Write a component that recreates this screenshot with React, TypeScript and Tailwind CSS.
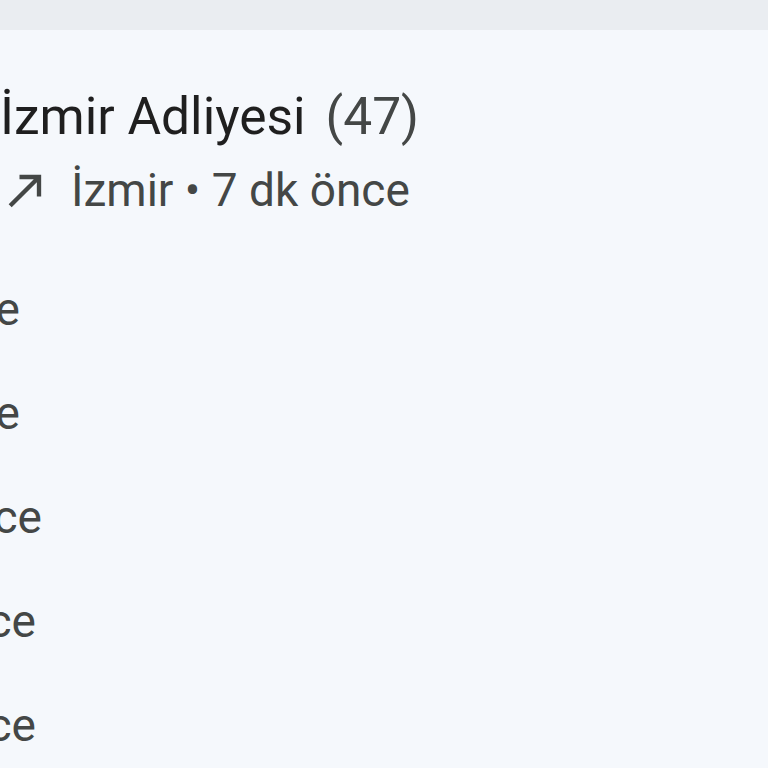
import React from "react";

const rows = [
  { text: "Ankara • 3 dk önce", w: "w-[420px]" },
  { text: "İstanbul • 5 dk önce", w: "w-[420px]" },
  { text: "Bursa • 12 dk önce", w: "w-[442px]" },
  { text: "Antalya • 18 dk önce", w: "w-[436px]" },
  { text: "Konya • 25 dk önce", w: "w-[436px]" },
];

export default function App() {
  return (
    <div
      className="w-[768px] h-[768px] overflow-hidden bg-[#f5f8fc] flex flex-col"
      style={{ fontFamily: "Roboto, 'Noto Sans', sans-serif" }}
    >
      <div className="h-[30px] shrink-0 bg-[#eaedf1]" />
      <div className="flex flex-col pt-[57px]">
        <div className="flex items-baseline text-[51.5px] leading-[60px] whitespace-nowrap">
          <span className="text-[#1f1f1f]">İzmir Adliyesi</span>
          <span className="ml-[20px] text-[#444746]">(47)</span>
        </div>
        <div className="mt-[15px] flex items-center h-[56px] text-[46px] leading-[56px] text-[#444746] whitespace-nowrap">
          <svg width="52" height="52" viewBox="0 0 24 24" className="shrink-0" fill="#444746">
            <path d="M9 5v2h6.59L4 18.59 5.41 20 17 8.41V15h2V5H9z" />
          </svg>
          <span className="ml-[19px]">İzmir • 7 dk önce</span>
        </div>
        <div className="mt-[39px] -ml-[400px] flex flex-col">
          {rows.map((r, i) => (
            <div
              key={i}
              className={`${r.w} h-[104px] text-right text-[46px] leading-[104px] text-[#444746] whitespace-nowrap`}
            >
              {r.text}
            </div>
          ))}
        </div>
      </div>
    </div>
  );
}
